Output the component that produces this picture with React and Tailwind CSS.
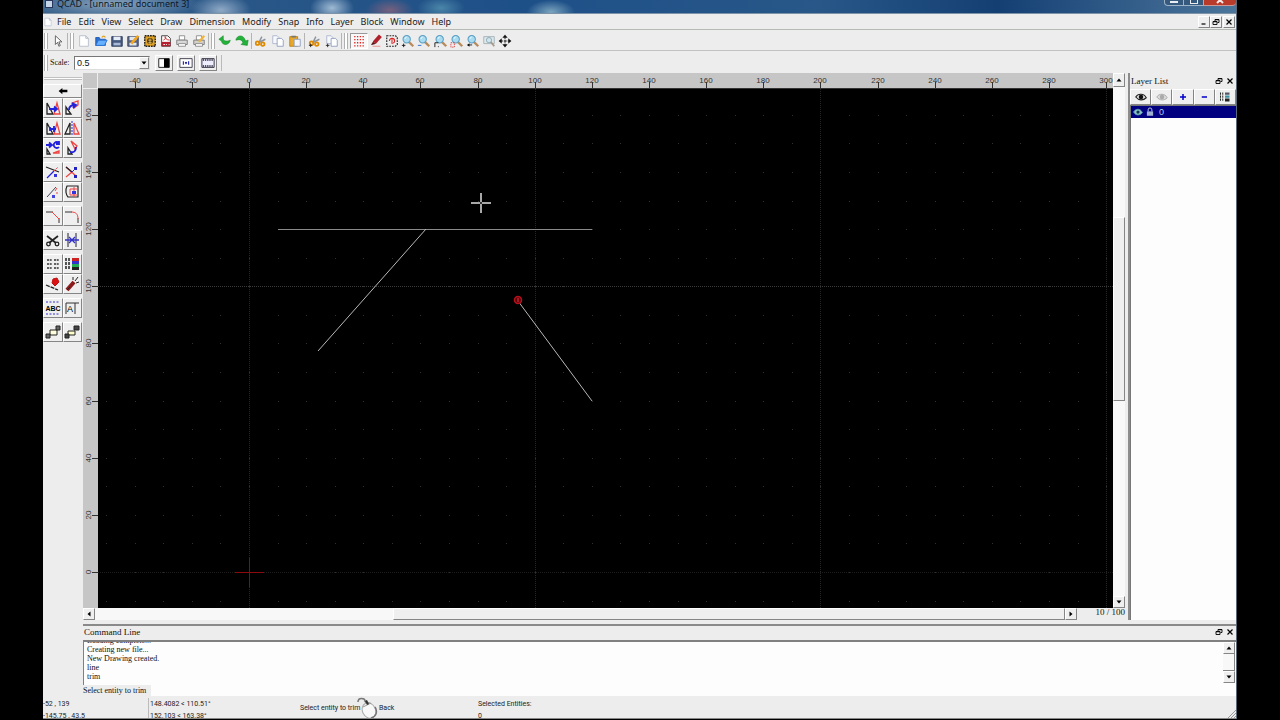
import clsx from "clsx";

const SCALE = 2.857;
const ORIGIN = { x: 151, y: 483 };
const px = (u) => Math.round(ORIGIN.x + u * SCALE);
const py = (u) => Math.round(ORIGIN.y - u * SCALE);
const range = (from, to, step) =>
  Array.from({ length: Math.floor((to - from) / step) + 1 }, (_, i) => from + i * step);
// side panels and frame take 265px of the window
const lastUnit = () => Math.floor((window.innerWidth - 265 - ORIGIN.x) / SCALE);

const MENUS = ["File", "Edit", "View", "Select", "Draw", "Dimension", "Modify", "Snap", "Info", "Layer", "Block", "Window", "Help"];

const magnifier = (
  <>
    <path d="M9 9l5 5" stroke="#b98a5a" strokeWidth="2.6" />
    <circle cx="6.5" cy="6" r="4.2" fill="#a9dcf0" stroke="#5b9fc4" strokeWidth="1.2" />
    <path d="M4.5 5.5a2.5 2.5 0 012-2" stroke="#fff" />
  </>
);
const scissors = (
  <>
    <path d="M9 3L6 9M13 6l-8 4" stroke="#8a93a0" strokeWidth="1.6" />
    <circle cx="4" cy="10.5" r="2" stroke="#e08a00" strokeWidth="2" />
    <circle cx="10" cy="11.5" r="2" stroke="#e08a00" strokeWidth="2" />
  </>
);
const pages = (
  <>
    <path d="M2 2h5l2 2v7H2z" fill="#f7f9fd" stroke="#a9b4cb" />
    <path d="M7 5h5l2 2v7H7z" fill="#fff" stroke="#8d9bbd" />
  </>
);
const triangles = (
  <>
    <path d="M2 3v11h6z" stroke="#222" strokeWidth="1.3" />
    <path d="M12 3L9 14h6z" stroke="#e44" strokeWidth="1.3" />
  </>
);

const ICONS = {
  arrow: <path d="M5 2v10l2.5-2.5L9 14l1.6-.8L9 9h3.5z" fill="#fff" stroke="#555" />,
  new: <path d="M3 2h7l3 3v9H3z M10 2v3h3" fill="#fff" stroke="#b4bccb" />,
  open: (
    <>
      <path d="M2 13V4h4l1 2h6v7z" fill="#2b6fd0" stroke="#1b58b8" />
      <path d="M2 13l3-6h10l-3 6z" fill="#65b0ff" stroke="#2b6fd0" />
      <path d="M9 4c1-2 3-2 4 0" stroke="#e0a020" strokeWidth="1.5" />
    </>
  ),
  save: (
    <>
      <path d="M2 3h12v11H2z" fill="#46597f" stroke="#2b3a5c" />
      <path d="M4 3h8v4H4z" fill="#e6edf7" />
      <path d="M4 10h8v3H4z" fill="#a9b8d5" />
    </>
  ),
  saveAs: (
    <>
      <path d="M2 3h12v11H2z" fill="#5a6480" stroke="#3a4666" />
      <path d="M4 3h8v4H4zM4 10h8v3H4z" fill="#dfe6f2" />
      <path d="M14 2l-8 9" stroke="#f2a51d" strokeWidth="3" />
    </>
  ),
  bitmap: (
    <>
      <path d="M2 2h12v12H2z" fill="#e0a021" stroke="#222" strokeWidth="1.6" strokeDasharray="2 1" />
      <circle cx="8" cy="8" r="3.4" fill="#443514" />
      <path d="M6 7h4M6 10h4M8 5v7" stroke="#efc45a" />
    </>
  ),
  pdf: (
    <>
      <path d="M3 2h7l3 3v9H3z" fill="#fff" stroke="#333" />
      <path d="M3 9h10v5H3z" fill="#b51e2e" />
      <path d="M5 7c3-1 3-4 2-4s1 4 5 4" stroke="#c22" />
      <path d="M5 12h2M8 12h1M11 12h1" stroke="#fff" />
    </>
  ),
  print: (
    <>
      <path d="M5 2h6v5H5z" fill="#fff" stroke="#888" />
      <path d="M2 7h12v5H2z" fill="#d8d8d8" stroke="#777" />
      <path d="M4 11h8v3H4z" fill="#fff" stroke="#888" />
    </>
  ),
  preview: (
    <>
      <path d="M5 2h6v5H5z" fill="#fff" stroke="#888" />
      <path d="M2 7h12v5H2z" fill="#d3d0cc" stroke="#777" />
      <path d="M4 11h8v3H4z" fill="#fff" stroke="#888" />
      <path d="M14 2l-6 7" stroke="#f0b43a" strokeWidth="2.5" />
    </>
  ),
  undo: <path d="M1 6l5-4v3c0 3 4 4 8 2-1 6-9 7-10 1z" fill="#24b33a" stroke="#168a2b" strokeWidth=".7" />,
  redo: <path d="M14 13l-7-1 2-2C8 6 5 6 1 7c1-6 9-7 11 1l3-1z" fill="#24b33a" stroke="#168a2b" strokeWidth=".7" />,
  cut: scissors,
  copy: pages,
  paste: (
    <>
      <path d="M2 3h9v11H2z" fill="#e8a92a" stroke="#b5801a" />
      <path d="M4 2h5v2H4z" fill="#777" />
      <path d="M7 6h7v8H7z" fill="#f4f6fb" stroke="#8d9bbd" />
    </>
  ),
  cutRef: (
    <>
      {scissors}
      <path d="M1 13h4M3 11v4" stroke="#222" />
    </>
  ),
  copyRef: (
    <>
      {pages}
      <path d="M1 13h4M3 11v4" stroke="#222" />
    </>
  ),
  grid: <path d="M2.5 3h11M2.5 6.5h11M2.5 10h11M2.5 13.5h11" stroke="#d22" strokeWidth="1.5" strokeDasharray="1.5 1.67" />,
  draft: (
    <>
      <path d="M13 2L6 10" stroke="#b0202a" strokeWidth="4.5" />
      <path d="M5 9l-2 3 4-1" fill="#511" stroke="#511" />
      <path d="M4 14h9" stroke="#e88" />
    </>
  ),
  redraw: (
    <>
      <path d="M2 2h10l2 2v8l-2 2H2z" stroke="#222" strokeWidth="1.3" strokeDasharray="2 1.2" />
      <path d="M5 8a3 3 0 116 0c0 2-2 3-4 2M8 6v3" stroke="#d22" strokeWidth="1.2" />
    </>
  ),
  zoomIn: <>{magnifier}<path d="M1 13h4M3 11v4" stroke="#111" /></>,
  zoomOut: <>{magnifier}<path d="M1 13h4" stroke="#26c" /></>,
  zoomAuto: <>{magnifier}<path d="M1 10h4M1 10v5M5 14v1" stroke="#111" /></>,
  zoomSelect: <>{magnifier}<path d="M1 10h4v5H1z" stroke="#d33" strokeDasharray="1.5 1" /></>,
  zoomPrev: <>{magnifier}<path d="M1 12.5l3-2v4z" fill="#111" /><path d="M3 12.5h4" stroke="#111" /></>,
  zoomWindow: (
    <>
      <path d="M2 3h12v8H2z" fill="#e1e8ea" stroke="#9fb0b5" />
      <circle cx="8" cy="7" r="3" fill="#cfe6ee" stroke="#8aa8b4" />
      <path d="M10 9l4 5" stroke="#a79b8d" strokeWidth="2" />
    </>
  ),
  pan: (
    <>
      <path d="M8 3v10M3 8h10" stroke="#111" strokeDasharray="3 1" />
      <path d="M8 1l2.5 3h-5zM8 15l2.5-3h-5zM1 8l3-2.5v5zM15 8l-3-2.5v5z" fill="#111" stroke="#111" strokeWidth=".5" />
    </>
  ),
  back: <path d="M1 8l6-5v3h8v4H7v3z" fill="#000" />,
  move: <>{triangles}<path d="M4 9h7M9 6.5L12 9l-3 2.5" stroke="#22d" strokeWidth="1.8" /></>,
  rotate: (
    <>
      <path d="M2 7v7h5z" stroke="#222" strokeWidth="1.3" />
      <path d="M8 3l6-2v4l-4 3z" stroke="#e44" strokeWidth="1.3" />
      <path d="M5 10c0-4 3-5 6-5M8 3l4 2-3 3" stroke="#22d" strokeWidth="1.8" />
    </>
  ),
  scale: <>{triangles}<path d="M5 9h6M9 6v6M5 7v4" stroke="#22d" strokeWidth="1.8" /></>,
  mirror: (
    <>
      <path d="M6 3v11H1z" stroke="#222" strokeWidth="1.3" />
      <path d="M10 3v11h5z" stroke="#e44" strokeWidth="1.3" />
      <path d="M8 1v14" stroke="#22d" strokeDasharray="2 1" />
    </>
  ),
  moveRotate: (
    <>
      <path d="M1 5h6M4 2.5L7 5 4 7.5M14 3a3 3 0 100 4M14 1v3h-3" stroke="#22d" strokeWidth="1.8" />
      <path d="M2 9v5h3z" stroke="#222" strokeWidth="1.3" />
      <path d="M8 13l6-2v2z" stroke="#e44" strokeWidth="1.3" />
    </>
  ),
  rotate2: (
    <>
      <path d="M4 8v6h4z" stroke="#222" strokeWidth="1.3" />
      <path d="M7 1l6 5-2 3z" stroke="#e44" strokeWidth="1.3" />
      <path d="M6 12c4 1 6-1 6-5" stroke="#22d" strokeWidth="1.8" />
    </>
  ),
  trim: (
    <>
      <path d="M1 3l13 5" stroke="#222" strokeWidth="1.2" />
      <path d="M2 14l7-7" stroke="#22d" strokeWidth="1.2" />
      <path d="M9 7l4-4" stroke="#e44" strokeDasharray="2 1" />
      <path d="M9 10h3v3H9z" fill="#33d" />
    </>
  ),
  trimBoth: (
    <>
      <path d="M2 3l10 9M2 13l6-5" stroke="#e44" strokeWidth="1.2" />
      <path d="M2 3l6 5" stroke="#222" strokeWidth="1.2" />
      <path d="M10 3h3v3h-3zM10 11h3v3h-3z" fill="#22b" />
      <path d="M8 8l4-4" stroke="#22d" />
    </>
  ),
  lengthen: (
    <>
      <path d="M2 13l9-10" stroke="#445" />
      <path d="M7 11h3v3H7z" fill="#44d" />
      <path d="M11 9h2M10 7l2-3" stroke="#e44" />
    </>
  ),
  offset: (
    <>
      <path d="M14 2H3c-2 4-1 9 1 11h10z" stroke="#222" strokeWidth="1.2" />
      <path d="M13 5H6v6h7M10 3v10" stroke="#e44" />
      <path d="M8 7h4v3H8z" fill="#33d" />
    </>
  ),
  chamfer: (
    <>
      <path d="M1 4h7M14 10v5" stroke="#333" />
      <path d="M7 4l7 7" stroke="#e44" />
    </>
  ),
  fillet: (
    <>
      <path d="M1 4h7M14 10v5" stroke="#333" />
      <path d="M7 4c5 0 7 2 7 7" stroke="#e44" />
    </>
  ),
  divide: (
    <>
      <path d="M2 4l9 7M13 4l-9 7" stroke="#222" strokeWidth="1.8" />
      <circle cx="3.5" cy="12" r="1.8" stroke="#222" strokeWidth="1.3" />
      <circle cx="12" cy="12" r="1.8" stroke="#222" strokeWidth="1.3" />
    </>
  ),
  breakOut: (
    <>
      <path d="M4 1v14M12 1v14" stroke="#223" />
      <path d="M1 8h14M5 5l6 6M11 5l-6 6" stroke="#33c" strokeWidth="1.4" />
    </>
  ),
  stretch: <path d="M2 4h5M9 4h5M2 8h5M9 8h5M2 12h5M9 12h5" stroke="#333" strokeWidth="1.6" strokeDasharray="2 .7" />,
  properties: (
    <>
      <path d="M2 2v12M5 2v12" stroke="#222" strokeWidth="1.5" strokeDasharray="3 1" />
      <path d="M8 2h7v3H8z" fill="#c22" />
      <path d="M8 5h7v3H8z" fill="#33c" />
      <path d="M8 8h7v3H8z" fill="#2a5" />
      <path d="M8 11h7v3H8z" fill="#222" />
    </>
  ),
  erase: (
    <>
      <path d="M8 3l4-1 2 4-4 4-3-3z" fill="#d11" stroke="#b11" />
      <path d="M1 9l12 5" stroke="#222" strokeWidth="1.3" strokeDasharray="4 1" />
    </>
  ),
  explode: (
    <>
      <path d="M3 14l7-8" stroke="#8c1c1c" strokeWidth="4" />
      <path d="M3 14l3-3M11 5l3-4M12 7l3-1M9 4l0-3" stroke="#222" />
    </>
  ),
  text: (
    <>
      <path d="M1 2h14M1 14h14" stroke="#33c" strokeDasharray="2 1.5" />
      <text x="8" y="11" textAnchor="middle" className="fill-black font-['Liberation_Sans'] text-[7px] font-bold">ABC</text>
    </>
  ),
  textEdit: (
    <>
      <path d="M2 14V3h13M11 3v11" stroke="#333" />
      <text x="6" y="12" textAnchor="middle" className="fill-black font-['Liberation_Sans'] text-[9px]">A</text>
    </>
  ),
  block: (
    <>
      <path d="M5 6h7v5H5z" fill="#ffd" stroke="#222" />
      <path d="M11 2h4v4h-4zM1 10h4v4H1z" fill="#666" stroke="#222" />
    </>
  ),
  block2: (
    <>
      <path d="M4 7h7v4H4z" fill="#ffc" stroke="#222" />
      <path d="M10 2h5v4h-5zM1 10h4v4H1z" fill="#444" stroke="#222" />
    </>
  ),
  halves: (
    <>
      <path d="M2 3h12v10H2z" fill="#fff" stroke="#111" />
      <path d="M8 3h6v10H8z" fill="#000" />
    </>
  ),
  fit: (
    <>
      <path d="M1 3h14v10H1z" fill="#fff" stroke="#334" />
      <path d="M5 6v4M11 6v4M7 7l2 2M9 7l-2 2" stroke="#22a" strokeWidth="1.3" />
    </>
  ),
  film: (
    <>
      <path d="M1 3h14v10H1z" fill="#eef" stroke="#223" />
      <path d="M2 4.5h12M2 11.5h12" stroke="#223" strokeWidth="1.6" strokeDasharray="1.5 1" />
    </>
  ),
  eye: (
    <>
      <path d="M1 8c3-5 11-5 14 1-4 4-10 4-14-1z" fill="#ddd" stroke="#222" strokeWidth="1.5" />
      <circle cx="8" cy="8" r="3" fill="#111" />
    </>
  ),
  eyeOff: (
    <>
      <path d="M1 8c3-5 11-5 14 1-4 4-10 4-14-1z" fill="#ddd" stroke="#aaa" strokeWidth="1.3" />
      <circle cx="8" cy="8" r="3" fill="#aaa" />
    </>
  ),
  plus: <path d="M8 4v8M4 8h8" stroke="#00c" strokeWidth="2" />,
  minus: <path d="M5 8h7" stroke="#00c" strokeWidth="2" />,
  layerEdit: (
    <>
      <path d="M2 2v12M5 2v12" stroke="#222" strokeWidth="1.3" strokeDasharray="3 1" />
      <path d="M8 2h6v3H8z" fill="#556" />
      <path d="M8 6h6v3H8z" fill="#3a8fa0" />
      <path d="M8 10h6v4H8z" fill="#222" />
    </>
  ),
  lock: (
    <>
      <path d="M5 7V4.5a3 3 0 016 0V7" stroke="#b8c4dd" strokeWidth="1.6" />
      <path d="M3 7h10v7H3z" fill="#9fb0d0" />
    </>
  ),
  layerEye: (
    <>
      <path d="M1 8c3-6 11-6 14 1-4 5-11 5-14-1z" fill="#8cc7c7" stroke="#5b9aa8" strokeWidth="1.5" />
      <circle cx="8" cy="8" r="2.6" fill="#135" />
    </>
  ),
  restore: <path d="M6 6V3h8v6h-3M2 7h8v6H2zM6 3.5h8M2 7.5h8" stroke="#000" strokeWidth="1.8" />,
  close: <path d="M3 3l10 10M13 3L3 13" stroke="#000" strokeWidth="2.4" />,
  minimize: <path d="M3 12h8" stroke="#000" strokeWidth="2.4" />,
  up: <path d="M8 5l5 6H3z" fill="#000" />,
  down: <path d="M8 11L3 5h10z" fill="#000" />,
  left: <path d="M5 8l6-5v10z" fill="#000" />,
  right: <path d="M11 8L5 3v10z" fill="#000" />,
};

const FILE_TOOLS = ["new", "open", "save", "saveAs", "bitmap", "pdf", "print", "preview"];
const VIEW_TOOLS = ["grid", "draft", "redraw", "zoomIn", "zoomOut", "zoomAuto", "zoomSelect", "zoomPrev", "zoomWindow", "pan"];
const MODIFY_GROUPS = [
  ["move", "rotate", "scale", "mirror", "moveRotate", "rotate2"],
  ["trim", "trimBoth", "lengthen", "offset"],
  ["chamfer", "fillet"],
  ["divide", "breakOut"],
  ["stretch", "properties", "erase", "explode"],
  ["text", "textEdit"],
  ["block", "block2"],
];
const HISTORY = ["Loading complete...", "Creating new file...", "New Drawing created.", "line", "trim"];

function Icon({ name, className = "size-3.5" }) {
  return (
    <svg viewBox="0 0 16 16" fill="none" aria-hidden="true" className={clsx("shrink-0", className)}>
      {ICONS[name]}
    </svg>
  );
}

function IconButton({ name, className, iconClass }) {
  return (
    <button type="button" aria-label={name} className={clsx("flex items-center justify-center", className)}>
      <Icon name={name} className={iconClass} />
    </button>
  );
}

const RAISED = "border border-t-white border-l-white border-r-[#858585] border-b-[#858585] bg-[#efefef]";

function Handle() {
  return <span className="mr-0.5 ml-px h-4 w-1 shrink-0 border-x border-[#b0b0b0] bg-white" />;
}

function Separator() {
  return <span className="mx-px h-4 w-px shrink-0 bg-[#b4b4b4]" />;
}

function ToolGroup({ names, className, active }) {
  return (
    <div className={clsx("flex h-full shrink-0 items-center", className)}>
      {names.map((name) => (
        <IconButton
          key={name}
          name={name}
          className={clsx("h-4 flex-1", name === active && "border border-t-[#999] border-l-[#999] border-r-white border-b-white bg-[#f8f8f8]")}
        />
      ))}
    </div>
  );
}

function TitleBar() {
  return (
    <header className="flex h-3.5 shrink-0 items-start justify-between overflow-hidden border-b border-[#7d93a8] bg-[radial-gradient(ellipse_30px_16px_at_178px_10px,#8fa9c6,transparent),radial-gradient(ellipse_90px_16px_at_70px_4px,#8aa4bd,transparent),radial-gradient(ellipse_22px_14px_at_289px_8px,#9fbad3,transparent),radial-gradient(ellipse_24px_12px_at_347px_10px,#75607f,transparent),radial-gradient(ellipse_24px_12px_at_398px_8px,#4b86a9,transparent),radial-gradient(ellipse_24px_12px_at_508px_12px,#7ba4be,transparent),linear-gradient(90deg,#315b86,#1e5088_40%,#285788_65%,#143f73_80%,#4c759b)]">
      <div className="flex items-center">
        <span className="ml-0.5 size-2 border border-[#26365c] bg-[#c5d4e6]" />
        <h1 className="ml-1 font-['Noto_Sans','Open_Sans',sans-serif] text-[9px] leading-[8px] text-[#0c1826]">
          QCAD - [unnamed document 3]
        </h1>
      </div>
      <div className="flex h-1.5 shrink-0">
        <button type="button" aria-label="Minimize" className="flex w-5 items-start justify-center rounded-bl-sm border border-t-0 border-[#9cb3c8] bg-[#365a7e]">
          <span className="mt-px h-0.5 w-2 bg-[#e8eef4]" />
        </button>
        <button type="button" aria-label="Maximize" className="flex w-5 items-start justify-center border-r border-b border-[#9cb3c8] bg-[#365a7e]">
          <span className="h-1 w-2 border border-t-0 border-[#e8eef4]" />
        </button>
        <button type="button" aria-label="Close" className="flex w-8 items-start justify-center rounded-br-sm border-b border-[#c99] bg-[#b83a2a]">
          <svg viewBox="0 0 8 4" className="h-1 w-2"><path d="M4 0L1 3M4 0l3 3" stroke="#f4e8e8" strokeWidth="2" /></svg>
        </button>
      </div>
    </header>
  );
}

function MenuBar() {
  return (
    <nav className="flex h-4 shrink-0 items-center border-b border-[#b5bab5]">
      <Icon name="new" className="size-2.5" />
      <ul className="ml-1 flex items-center gap-[7px] font-['Noto_Sans','Open_Sans',sans-serif] text-[9px] leading-3 text-[#222]">
        {MENUS.map((menu) => (
          <li key={menu}>
            <button type="button">{menu}</button>
          </li>
        ))}
      </ul>
      <div className="mr-px ml-auto flex">
        <IconButton name="minimize" className={clsx("h-3 w-3", RAISED)} iconClass="size-2" />
        <IconButton name="restore" className={clsx("mr-px h-3 w-3", RAISED)} iconClass="size-2" />
        <IconButton name="close" className={clsx("h-3 w-3", RAISED)} iconClass="size-2" />
      </div>
    </nav>
  );
}

function ToolBar() {
  return (
    <div className="flex h-[21px] shrink-0 items-center border-b border-[#c2c2c2] pt-0.5">
      <Handle />
      <ToolGroup names={["arrow"]} className="w-4" />
      <Separator />
      <Handle />
      <ToolGroup names={FILE_TOOLS} className="w-[131px]" />
      <Separator />
      <Handle />
      <ToolGroup names={["undo", "redo"]} className="w-[33px]" />
      <Separator />
      <ToolGroup names={["cut", "copy", "paste"]} className="w-[50px]" />
      <Separator />
      <ToolGroup names={["cutRef", "copyRef"]} className="w-[34px]" />
      <Separator />
      <Handle />
      <ToolGroup names={VIEW_TOOLS} className="w-[163px]" active="grid" />
    </div>
  );
}

function ScaleBar() {
  return (
    <div className="flex h-[22px] shrink-0 items-center pt-0.5">
      <Handle />
      <label htmlFor="scale" className="w-6 text-[8px]">Scale:</label>
      <div className="relative">
        <select
          id="scale"
          defaultValue="0.5"
          className="block h-3.5 w-[76px] appearance-none border border-t-[#777] border-l-[#777] border-[#ddd] bg-white pl-0.5 font-['Liberation_Sans',sans-serif] text-[9px] leading-3"
        >
          <option>0.5</option>
          <option>1</option>
          <option>2</option>
        </select>
        <span className={clsx("pointer-events-none absolute top-px right-px flex h-3 w-2.5 items-center justify-center", RAISED)}>
          <Icon name="down" className="size-2" />
        </span>
      </div>
      <div className="ml-[5px] flex gap-1">
        <IconButton name="halves" className={clsx("h-4 w-[18px]", RAISED)} />
        <IconButton name="fit" className={clsx("h-4 w-[18px]", RAISED)} />
        <IconButton name="film" className={clsx("h-4 w-[18px]", RAISED)} />
      </div>
      <span className="ml-1 h-4 w-px bg-[#c5b5b5]" />
    </div>
  );
}

function ModifyPanel() {
  return (
    <aside className="flex w-10 shrink-0 flex-col pt-1">
      <span className="mx-px mb-1 h-[3px] border-y border-[#c0c0c0] bg-white" />
      <IconButton name="back" className={clsx("h-3.5 w-[39px]", RAISED)} iconClass="size-2.5" />
      <div className="flex w-[39px] flex-col gap-1">
        {MODIFY_GROUPS.map((group) => (
          <div key={group[0]} className="grid grid-cols-2">
            {group.map((name) => (
              <IconButton key={name} name={name} className={clsx("h-5", RAISED)} iconClass="size-4" />
            ))}
          </div>
        ))}
      </div>
    </aside>
  );
}

const RULER_TEXT = "fill-[#333] font-['Liberation_Sans',sans-serif] text-[8px]";

function TopRuler() {
  return (
    <svg className="h-4 w-full min-w-0 flex-1 bg-[#c6c6c6]" shapeRendering="crispEdges">
      {range(-40, lastUnit(), 20).map((u) => (
        <g key={u}>
          <text x={px(u)} y="10" textAnchor="middle" className={RULER_TEXT}>{u}</text>
          <path d={`M${px(u) + 0.5} 9v7`} stroke="#333" />
        </g>
      ))}
      <path d="M0 15.5h3000" stroke="#333" />
    </svg>
  );
}

function SideRuler() {
  return (
    <svg className="w-[15px] shrink-0 self-stretch bg-[#c6c6c6]">
      {range(0, 160, 20).map((u) => (
        <g key={u}>
          <text transform={`translate(8 ${py(u)}) rotate(-90)`} textAnchor="middle" className={RULER_TEXT}>{u}</text>
          <path d={`M9 ${py(u) + 0.5}h6`} stroke="#333" />
        </g>
      ))}
    </svg>
  );
}

function Drawing() {
  return (
    <svg className="h-full min-w-0 flex-1 bg-black" role="img" aria-label="Drawing">
      <g shapeRendering="crispEdges">
        {range(-50, lastUnit(), 10).map((x) =>
          range(-100, 160, 10).map((y) => (
            <rect key={`${x},${y}`} x={px(x)} y={py(y)} width="1" height="1" fill="#303030" />
          ))
        )}
        {range(0, lastUnit(), 100).map((x) => (
          <path key={x} d={`M${px(x) + 0.5} 0v2000`} stroke="#262626" strokeDasharray="1 1" />
        ))}
        {[0, 100].map((y) => (
          <path key={y} d={`M0 ${py(y) + 0.5}h3000`} stroke={y ? "#3c3c3c" : "#1c1c1c"} strokeDasharray="1 1" />
        ))}
        <path d={`M${px(0) - 14} ${py(0) + 0.5}h29M${px(0) + 0.5} ${py(0) - 14}v29`} stroke="#8c0a0e" />
        <path d={`M${px(10)} ${py(120) + 0.5}H${px(120)}`} stroke="#8a8a8a" />
        <path d="M373 114h20M383 104v20" stroke="#a8a8a8" strokeWidth="2" />
        <rect x="382" y="113" width="2" height="2" fill="#333" />
      </g>
      <path d={`M${px(62)} ${py(120)}L${px(24.3)} ${py(77.5)}M${px(94)} ${py(95)}L${px(120)} ${py(60)}`} stroke="#b8b8b8" />
      <circle cx={px(94)} cy={py(95) - 1} r="3.5" fill="#5a0008" stroke="#b80f1c" strokeWidth="1.5" />
      <path d={`M${px(94)} ${py(95) - 3}v4`} stroke="#e34" />
    </svg>
  );
}

function DrawingView() {
  return (
    <main className="flex min-w-0 flex-1 flex-col">
      <div className="flex min-h-0 flex-1">
        <div className="flex min-w-0 flex-1 flex-col">
          <div className="flex h-4 shrink-0">
            <span className="h-4 w-[15px] shrink-0 border-r border-b border-[#eee] bg-[#c6c6c6]" />
            <TopRuler />
          </div>
          <div className="flex min-h-0 flex-1">
            <SideRuler />
            <Drawing />
          </div>
        </div>
        <div className="flex w-3 shrink-0 flex-col bg-[#f8f8f8]">
          <IconButton name="up" className={clsx("h-3.5", RAISED)} iconClass="size-2" />
          <span className="flex-[131]" />
          <span className={clsx("flex-[183]", RAISED)} />
          <span className="flex-[196]" />
          <IconButton name="down" className={clsx("h-3", RAISED)} iconClass="size-2" />
        </div>
      </div>
      <div className="flex h-3 shrink-0">
        <div className="flex flex-1 bg-[#f8f8f8]">
          <IconButton name="left" className={clsx("w-3", RAISED)} iconClass="size-2" />
          <span className="flex-[298]" />
          <span className={clsx("flex-[671]", RAISED)} />
          <IconButton name="right" className={clsx("w-3", RAISED)} iconClass="size-2" />
        </div>
        <p className="w-12 text-right text-[9px] leading-[9px]">10 / 100</p>
      </div>
      <div className="h-1 shrink-0" />
    </main>
  );
}

function DockTitle({ children, className }) {
  return (
    <div className={clsx("flex shrink-0 items-center pr-px pl-px", className)}>
      <h2 className="flex-1 text-[9px] leading-3">{children}</h2>
      <IconButton name="restore" className="w-3" iconClass="size-2" />
      <IconButton name="close" className="w-2.5" iconClass="size-2" />
    </div>
  );
}

function LayerList() {
  return (
    <aside className="mb-1 ml-[3px] flex w-[108px] shrink-0 flex-col border-l-2 border-[#8c8c8c]">
      <DockTitle className="h-4">Layer List</DockTitle>
      <div className="flex h-4 shrink-0">
        {["eye", "eyeOff", "plus", "minus", "layerEdit"].map((name) => (
          <IconButton key={name} name={name} className={clsx("flex-1", RAISED)} iconClass="size-3" />
        ))}
      </div>
      <ul className="flex-1 border-t border-l border-[#777] bg-[#fdfdfd]">
        <li className="flex h-3 items-center gap-0.5 bg-[#000080] pl-0.5 font-['Liberation_Sans',sans-serif] text-[9px] leading-3 text-[#b9c9f0]">
          <Icon name="layerEye" className="size-2.5" />
          <Icon name="lock" className="size-2.5" />
          <span className="pl-0.5">0</span>
        </li>
      </ul>
    </aside>
  );
}

function CommandLine() {
  return (
    <section className="flex shrink-0 flex-col border-t-2 border-[#8a8a8a]">
      <DockTitle className="h-3.5 pb-0.5">Command Line</DockTitle>
      <div className="flex h-[45px] overflow-hidden border-t-2 border-l border-[#808080] bg-[#fdfdfd]">
        <div className="flex min-w-0 flex-1 flex-col justify-end pb-1 pl-[3px] text-[8px] leading-[9px]">
          {HISTORY.map((line) => (
            <p key={line} className="shrink-0">{line}</p>
          ))}
        </div>
        <div className="mr-px mb-0.5 flex w-3 shrink-0 flex-col bg-[#f8f8f8]">
          <IconButton name="up" className={clsx("h-3", RAISED)} iconClass="size-2" />
          <span className="flex-1 border-r border-b border-[#858585]" />
          <IconButton name="down" className={clsx("h-3", RAISED)} iconClass="size-2" />
        </div>
      </div>
      <div className="flex h-[11px] items-center">
        <label htmlFor="command" className="w-[68px] text-[8px] leading-[11px] whitespace-nowrap">Select entity to trim</label>
        <input id="command" type="text" className="h-full min-w-0 flex-1 bg-[#fdfdfd] px-1 text-[8px] outline-none" />
      </div>
    </section>
  );
}

function StatusBar() {
  return (
    <footer className="flex h-[23px] shrink-0 items-stretch overflow-hidden border-b border-[#888] pt-0.5 font-['Roboto',sans-serif] text-[7px] leading-3 text-[#222]">
      <div className="w-[105px]">
        <p>-52 , 139</p>
        <p>-145.75 , 43.5</p>
      </div>
      <div className="w-[152px] border-l border-[#bbb] pl-px">
        <p>148.4082 &lt; 110.51°</p>
        <p>152.103 &lt; 163.38°</p>
      </div>
      <div className="flex w-[178px] items-center">
        <span className="w-[57px] text-right whitespace-nowrap">Select entity to trim</span>
        <svg viewBox="0 0 22 22" fill="none" className="size-[22px] shrink-0">
          <path d="M1 5c0-5 7-4 7-1s6 0 7 5" stroke="#777" strokeWidth="1.5" />
          <ellipse cx="12" cy="13.5" rx="6.5" ry="8" transform="rotate(-28 12 13.5)" fill="#f8f8f8" stroke="#aaa" />
          <path d="M18 10c3 5 1 10-4 11" stroke="#777" strokeWidth="1.5" />
          <path d="M6 10l8-4M9 3l2 5" stroke="#999" />
          <path d="M8 4l2-1 2 4-2 1z" fill="#333" />
        </svg>
        <span>Back</span>
      </div>
      <div>
        <p>Selected Entities:</p>
        <p>0</p>
      </div>
      <svg viewBox="0 0 8 8" className="ml-auto size-2 self-end">
        <path d="M0 8l8-8M3 8l5-5M6 8l2-2" stroke="#999" />
      </svg>
    </footer>
  );
}

export default function App() {
  return (
    <div className="h-screen bg-black px-[43px] pb-px">
      <div className="flex h-full flex-col overflow-hidden border-r border-[#5b6878] bg-[#ededed] font-['Liberation_Serif',serif] text-[#111]">
        <TitleBar />
        <MenuBar />
        <ToolBar />
        <ScaleBar />
        <div className="flex min-h-0 flex-1">
          <ModifyPanel />
          <div className="flex min-w-0 flex-1 flex-col">
            <div className="flex min-h-0 flex-1">
              <DrawingView />
              <LayerList />
            </div>
            <CommandLine />
          </div>
        </div>
        <StatusBar />
      </div>
    </div>
  );
}
